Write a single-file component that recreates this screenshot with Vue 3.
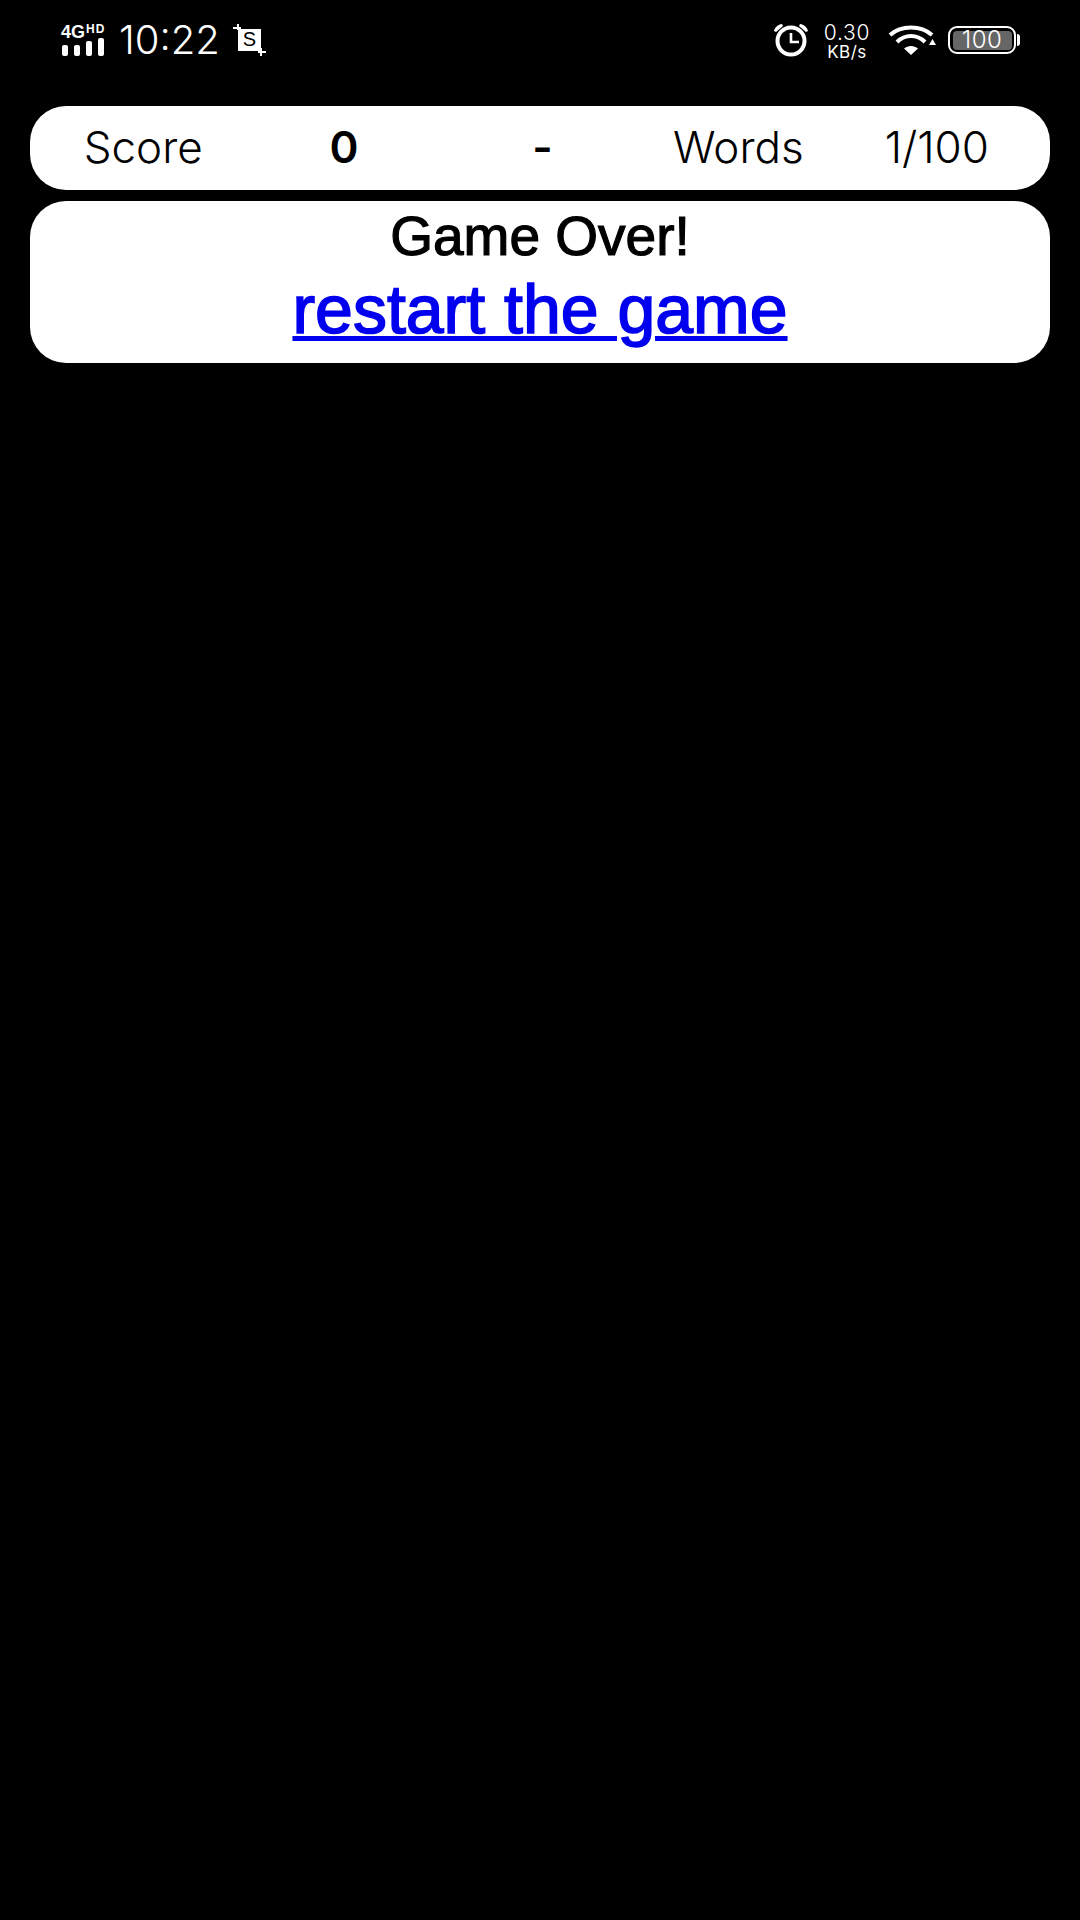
<script setup>
const stats = [
  { text: 'Score' },
  { text: '0', strong: true },
  { text: '-', strong: true },
  { text: 'Words' },
  { text: '1/100' },
]
</script>

<template>
  <div class="screen">
    <header class="status-bar">
      <div class="status-left">
        <svg class="ic-signal" width="48" height="40" viewBox="0 -4 48 40">
          <text x="1" y="14" class="net-4g">4G</text>
          <text x="26" y="9" class="net-hd">HD</text>
          <rect x="2" y="21" width="6" height="11" rx="2" fill="#fff" />
          <rect x="14" y="21" width="6" height="11" rx="2" fill="#fff" />
          <rect x="26" y="17" width="6" height="15" rx="2" fill="#fff" />
          <rect x="38" y="14" width="6" height="18" rx="2" fill="#fff" />
        </svg>
        <span class="time">10:22</span>
        <svg class="ic-shot" width="36" height="32" viewBox="0 0 36 32">
          <rect x="6" y="5" width="23" height="22" fill="#fff" />
          <path d="M1 4h8M6 0v6M26 28h8M29 24v8" stroke="#fff" stroke-width="2" fill="none" />
          <text x="17.5" y="22" class="shot-s">S</text>
        </svg>
      </div>
      <div class="status-right">
        <svg class="ic-alarm" width="36" height="34" viewBox="0 0 36 34">
          <circle cx="18" cy="18" r="13.500" fill="none" stroke="#fff" stroke-width="4" />
          <path d="M18 10v9h8" fill="none" stroke="#fff" stroke-width="2.600" />
          <path d="M1 8C2 4 5 1.500 9 1L10 3L3 9ZM35 8C34 4 31 1.500 27 1L26 3L33 9Z" fill="#fff" />
        </svg>
        <div class="speed">
          <span class="speed-num">0.30</span>
          <span class="speed-unit">KB/s</span>
        </div>
        <svg class="ic-wifi" width="48" height="32" viewBox="0 0 48 32">
          <path d="M2 11C13 1 33 1 44 11" fill="none" stroke="#fff" stroke-width="4" />
          <path d="M9 18C17 10 29 10 37 18" fill="none" stroke="#fff" stroke-width="4" />
          <path d="M16 24.500C20 21 26 21 30 24.500L23 31Z" fill="#fff" />
          <path d="M41 21L48 21L44.500 15Z" fill="#fff" />
        </svg>
        <div class="battery">
          <div class="battery-body"><span class="battery-fill">100</span></div>
          <div class="battery-cap"></div>
        </div>
      </div>
    </header>

    <main class="content">
      <section class="card stats">
        <div
          v-for="s in stats"
          :key="s.text"
          :class="['stat', { strong: s.strong }]"
        >
          {{ s.text }}
        </div>
      </section>
      <section class="card over">
        <div class="over-title">Game Over!</div>
        <a class="over-link" href="#">restart the game</a>
      </section>
    </main>
  </div>
</template>

<style>
html,
body {
  margin: 0;
  background: #000;
}
</style>

<style scoped>
.screen {
  width: 1080px;
  height: 1920px;
  background: #000;
  color: #fff;
  overflow: hidden;
  font-family: "Liberation Sans", Arial, sans-serif;
}

.status-bar {
  height: 80px;
  padding: 0 60px;
  box-sizing: border-box;
  display: flex;
  justify-content: space-between;
  align-items: center;
}

.status-left,
.status-right {
  display: flex;
  align-items: center;
}

.ic-signal {
  margin-right: 11px;
}

.net-4g {
  font: 700 18px "Liberation Sans", sans-serif;
  fill: #fff;
}

.net-hd {
  font: 700 12px "Liberation Sans", sans-serif;
  fill: #fff;
  letter-spacing: 1px;
}

.time {
  font: 300 40px Inter, sans-serif;
  line-height: 1;
  margin-right: 12px;
}

.shot-s {
  font: 400 20px "Liberation Sans", sans-serif;
  fill: #000;
  text-anchor: middle;
}

.ic-alarm {
  margin-right: 13px;
}

.speed {
  width: 50px;
  margin-right: 16px;
  display: flex;
  flex-direction: column;
  align-items: center;
  line-height: 1;
}

.speed-num {
  font: 300 21px Inter, sans-serif;
  letter-spacing: 0.800px;
}

.speed-unit {
  font: 400 17px Inter, sans-serif;
  line-height: 15px;
  letter-spacing: 0.500px;
}

.ic-wifi {
  margin-right: 12px;
}

.battery {
  display: flex;
  align-items: center;
}

.battery-body {
  width: 68px;
  height: 28px;
  box-sizing: border-box;
  border: 2.500px solid #fff;
  border-radius: 9px;
  padding: 2.500px;
  display: flex;
}

.battery-fill {
  flex: 1;
  background: #666;
  border-radius: 4px;
  color: #fff;
  font: 300 24px Inter, sans-serif;
  letter-spacing: 0.500px;
  line-height: 18px;
  text-align: center;
}

.battery-cap {
  width: 3px;
  height: 12px;
  margin-left: 1px;
  background: #fff;
  border-radius: 0 3px 3px 0;
}

.content {
  margin-top: 26px;
  padding: 0 30px;
  display: flex;
  flex-direction: column;
  gap: 11px;
}

.card {
  background: #fff;
  border-radius: 36px;
  color: #000;
}

.stats {
  height: 84px;
  box-sizing: border-box;
  padding: 0 14px 3px;
  display: grid;
  grid-template-columns: repeat(5, 1fr);
  align-items: center;
  text-align: center;
  font: 300 44px Inter, sans-serif;
}

.stat.strong {
  font-weight: 600;
  padding-left: 5px;
}

.over {
  height: 162px;
  display: flex;
  flex-direction: column;
  align-items: center;
}

.over-title {
  font-size: 55px;
  line-height: 70px;
  -webkit-text-stroke: 1.200px #000;
}

.over-link {
  font-size: 68px;
  line-height: 76px;
  color: #0000ee;
  text-decoration: underline;
  text-decoration-thickness: 5px;
  -webkit-text-stroke: 1.600px #0000ee;
}
</style>
